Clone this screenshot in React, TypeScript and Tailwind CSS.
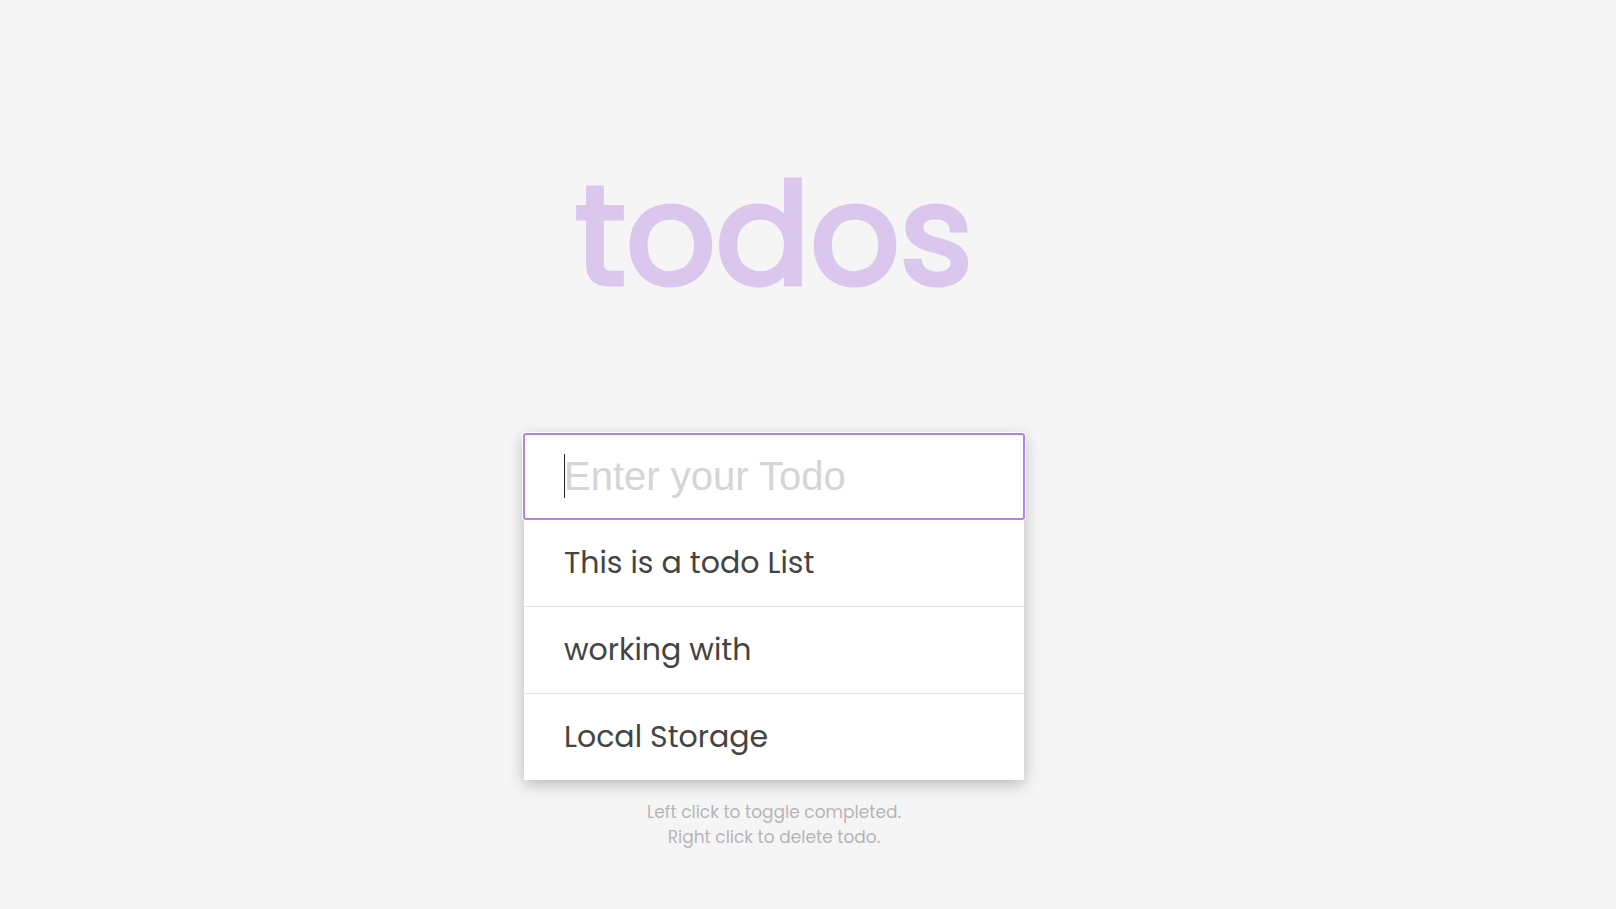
import { useState } from "react";
import type { FormEvent, MouseEvent } from "react";

type Todo = { text: string; completed: boolean };

const initialTodos: Todo[] = [
  { text: "This is a todo List", completed: false },
  { text: "working with", completed: false },
  { text: "Local Storage", completed: false },
];

export default function App() {
  const [todos, setTodos] = useState<Todo[]>(initialTodos);
  const [draft, setDraft] = useState("");

  const addTodo = (event: FormEvent) => {
    event.preventDefault();
    if (!draft.trim()) return;
    setTodos([...todos, { text: draft.trim(), completed: false }]);
    setDraft("");
  };

  const toggleTodo = (index: number) =>
    setTodos(todos.map((todo, i) => (i === index ? { ...todo, completed: !todo.completed } : todo)));

  const deleteTodo = (event: MouseEvent, index: number) => {
    event.preventDefault();
    setTodos(todos.filter((_, i) => i !== index));
  };

  return (
    <main className="flex min-h-screen flex-col items-center bg-[#f5f5f5] pt-[115px] pr-[68px] font-['Poppins','Inter',sans-serif] text-[#444]">
      <h1 className="text-center text-[140px] leading-[240px] font-normal text-[#dbc6ed] [-webkit-text-stroke:5px_#dbc6ed]">todos</h1>
      <form
        onSubmit={addTodo}
        className="mt-[79px] w-full max-w-[500px] bg-white shadow-[0_4px_15px_rgba(0,0,0,0.25)]"
      >
        <div className="relative">
          <input
            type="text"
            aria-label="New todo"
            placeholder="Enter your Todo"
            autoComplete="off"
            value={draft}
            onChange={(event) => setDraft(event.target.value)}
            className="relative block h-[85px] w-full rounded-xs bg-white px-10 font-['Liberation_Sans',Arial,sans-serif] text-[40px] shadow-[0_0_0_2px_#fff] outline-2 -outline-offset-1 outline-[#b482e4] placeholder:text-[#d5d5d5]"
          />
          {draft === "" && <span aria-hidden="true" className="absolute top-5 left-10 h-11 w-px bg-[#222]" />}
        </div>
        <ul>
          {todos.map((todo, index) => (
            <li key={index} className="border-t border-[#e5e5e5] first:border-transparent">
              <button
                type="button"
                onClick={() => toggleTodo(index)}
                onContextMenu={(event) => deleteTodo(event, index)}
                className={
                  todo.completed
                    ? "block h-[86px] w-full px-10 pb-0.5 text-left text-[30px] text-[#b6b6b6] line-through"
                    : "block h-[86px] w-full px-10 pb-0.5 text-left text-[30px]"
                }
              >
                {todo.text}
              </button>
            </li>
          ))}
        </ul>
      </form>
      <p className="mt-5 text-center text-[17px] leading-[25px] text-[#b5b5b5]">
        Left click to toggle completed.
        <br />
        Right click to delete todo.
      </p>
    </main>
  );
}
